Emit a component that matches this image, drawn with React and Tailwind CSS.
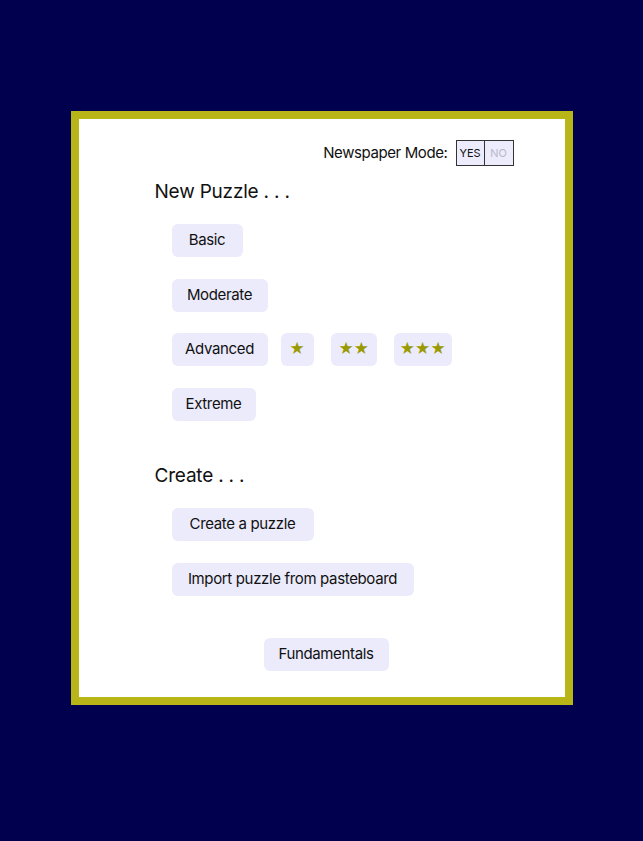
import React from "react";

const font = { fontFamily: "Inter, 'Noto Sans', sans-serif" };

function Btn({ w, children, color = "text-[#111]", cls = "" }) {
  return (
    <div
      className={`h-[33px] rounded-md bg-[#ebebfc] flex items-center justify-center text-[15px] tracking-[-0.35px] ${color} ${cls}`}
      style={{ width: w }}
    >
      {children}
    </div>
  );
}

export default function App() {
  return (
    <div className="min-h-screen bg-[#00004e] pt-[111px]" style={font}>
      <div className="mx-auto w-[502px] h-[594px] border-8 border-[#b7b517] bg-white flex flex-col">
        <div className="flex justify-end items-center pt-[21px] pr-[51px]">
          <span className="text-[15px] tracking-[-0.4px] text-[#111] mr-2">Newspaper Mode:</span>
          <div className="flex h-[26px] border border-[#333] bg-[#ececfc]">
            <div className="w-[28px] flex items-center justify-center text-[11px] text-[#111] border-r border-[#333]">YES</div>
            <div className="w-[28px] flex items-center justify-center text-[11px] text-[#b8b8c8]">NO</div>
          </div>
        </div>
        <div className="ml-[76px] mt-[14px] text-[19px] tracking-[-0.2px] leading-6 text-[#111]">New Puzzle . . .</div>
        <div className="ml-[93px] mt-[20px] flex flex-col gap-[21.5px]">
          <Btn w={71}>Basic</Btn>
          <Btn w={96}>Moderate</Btn>
          <div className="flex">
            <Btn w={96}>Advanced</Btn>
            <Btn w={33} color="text-[#9a9a00]" cls="ml-[13px]">★</Btn>
            <Btn w={46} color="text-[#9a9a00]" cls="ml-[17px]">★★</Btn>
            <Btn w={58} color="text-[#9a9a00]" cls="ml-[17px]">★★★</Btn>
          </div>
          <Btn w={84}>Extreme</Btn>
        </div>
        <div className="ml-[76px] mt-[43px] text-[19px] tracking-[-0.2px] leading-6 text-[#111]">Create . . .</div>
        <div className="ml-[93px] mt-[20px] flex flex-col gap-[22px]">
          <Btn w={142}>Create a puzzle</Btn>
          <Btn w={242}>Import puzzle from pasteboard</Btn>
        </div>
        <div className="pl-[185px] mt-[42px] flex">
          <Btn w={125}>Fundamentals</Btn>
        </div>
      </div>
    </div>
  );
}
